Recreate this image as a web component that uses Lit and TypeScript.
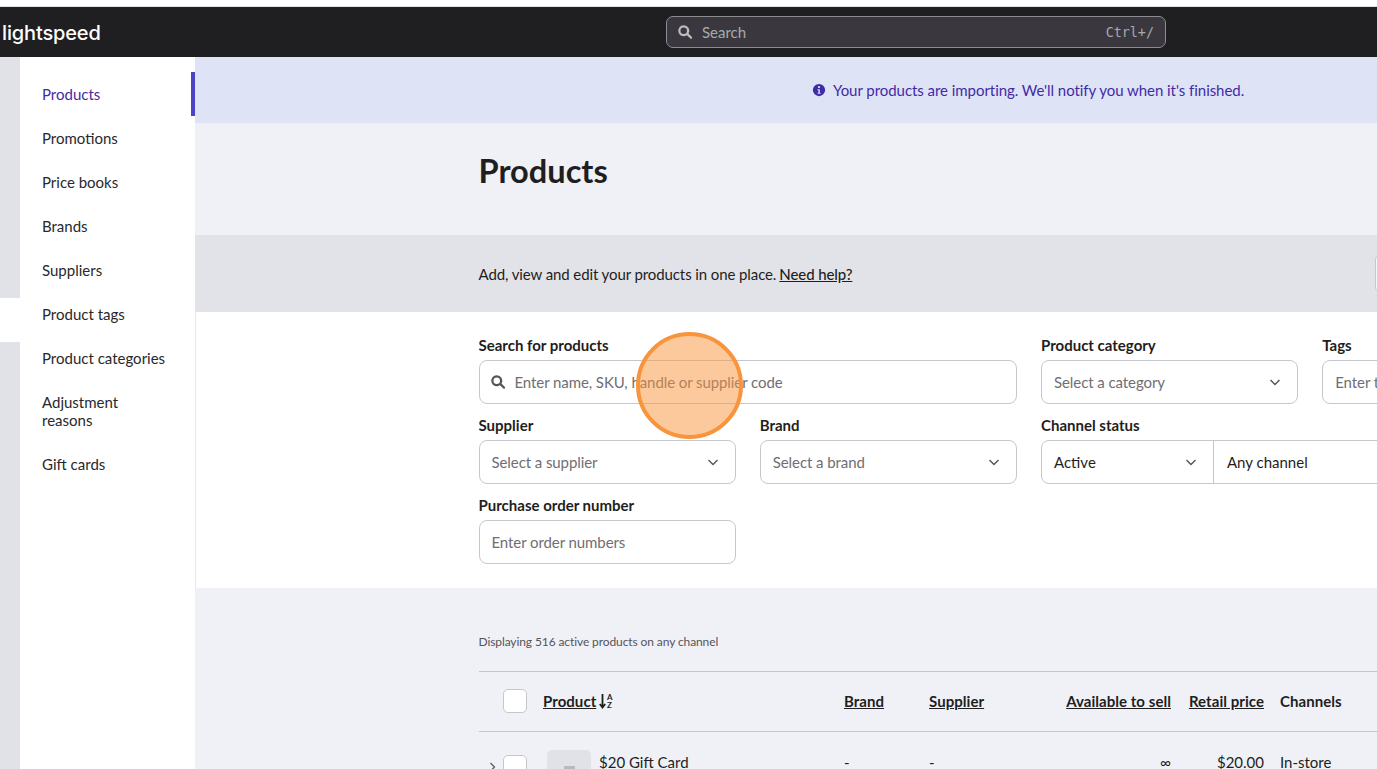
import { LitElement, html, css, svg } from "lit";
import { customElement } from "lit/decorators.js";

const searchIcon = svg`<path d="M10.300 3a7.300 7.300 0 1 0 4.300 13.200l4.500 4.500a1.500 1.500 0 0 0 2.100-2.100l-4.500-4.500A7.300 7.300 0 0 0 10.300 3zm0 3a4.300 4.300 0 1 1 0 8.600 4.300 4.300 0 0 1 0-8.600z" fill="currentColor" fill-rule="evenodd"/>`;

const chevron = html`<svg class="chev" viewBox="0 0 12 12"><path d="M1.500 4l4.500 4.500L10.500 4" fill="none" stroke="currentColor" stroke-width="1.400"/></svg>`;

const navItems = [
  "Products",
  "Promotions",
  "Price books",
  "Brands",
  "Suppliers",
  "Product tags",
  "Product categories",
  "Adjustment reasons",
  "Gift cards",
];

@customElement("app-root")
export class AppRoot extends LitElement {
  static styles = css`
    :host {
      display: block;
      position: relative;
      width: 1377px;
      height: 769px;
      overflow: hidden;
      background: #fff;
      font-family: Lato, "Liberation Sans", sans-serif;
      font-size: 15px;
      line-height: 18px;
      color: #1f1e21;
    }
    .topbar {
      margin-top: 6px;
      height: 51px;
      background: #1f1e21;
      position: relative;
      display: flex;
      align-items: center;
      padding-left: 666px;
      border-top: 1px solid #e1e2e8;
      box-sizing: border-box;
    }
    .logo {
      position: absolute;
      left: 2px;
      top: 13px;
      color: #fff;
      font-family: Inter, sans-serif;
      font-size: 20px;
      font-weight: 500;
      line-height: 26px;
      letter-spacing: -0.150px;
    }
    .global-search {
      width: 500px;
      height: 32px;
      box-sizing: border-box;
      border: 1px solid #8d8c91;
      border-radius: 7px;
      background: #3a383e;
      display: flex;
      align-items: center;
      padding: 0 11px;
      color: #a9a8ad;
    }
    .global-search svg {
      width: 18px;
      height: 18px;
      margin: 0 8px 0 -2px;
      color: #bdbcc1;
    }
    .global-search .kbd {
      margin-left: auto;
      padding-top: 2px;
      font-family: "DejaVu Sans Mono", monospace;
      font-size: 13.400px;
    }
    .body {
      display: flex;
      height: 712px;
    }
    .rail {
      width: 20px;
      flex: none;
      background: #e1e2e8;
    }
    .rail .notch {
      height: 44px;
      margin-top: 241px;
      background: #fff;
    }
    .side {
      width: 175px;
      flex: none;
      box-sizing: border-box;
      background: #fff;
      padding-top: 15px;
      color: #29282c;
    }
    .nav-item {
      padding: 13px 27px 13px 22px;
    }
    .nav-item.active {
      color: #3f2ba6;
      padding-right: 23px;
      border-right: 4px solid #4c44c6;
    }
    .main {
      flex: 1;
      min-width: 0;
      background: #f0f1f7;
    }
    .banner {
      height: 66px;
      background: #dfe3f6;
      color: #3f2ba6;
      display: flex;
      align-items: center;
      padding-left: 617px;
      gap: 7px;
      letter-spacing: -0.050px;
    }
    .banner svg {
      width: 14px;
      height: 14px;
    }
    .title {
      height: 112px;
      box-sizing: border-box;
      padding: 28px 0 0 283.500px;
    }
    .title h1 {
      margin: 0;
      font-size: 32.600px;
      line-height: 40px;
      font-weight: 700;
    }
    .intro {
      height: 77px;
      background: #e2e3e8;
      box-sizing: border-box;
      padding-left: 283.500px;
      display: flex;
      align-items: center;
      position: relative;
      letter-spacing: -0.100px;
    }
    .intro a {
      color: inherit;
      margin-left: 3px;
      font-weight: 500;
      text-decoration: underline;
    }
    .intro .btn {
      position: absolute;
      left: 1180px;
      top: 19px;
      width: 60px;
      height: 39px;
      box-sizing: border-box;
      border: 1px solid #c6c7cc;
      border-radius: 6px;
      background: #f6f6f9;
    }
    .filters {
      height: 276px;
      box-sizing: border-box;
      background: #fff;
      border-left: 1px solid #e8e9ee;
      padding: 24px 0 0 282.500px;
      display: grid;
      grid-template-columns: repeat(4, 257.250px);
      grid-auto-rows: 80px;
      column-gap: 24px;
    }
    .field {
      display: flex;
      flex-direction: column;
      min-width: 0;
    }
    .field.wide {
      grid-column: span 2;
    }
    .field.clip {
      width: 400px;
    }
    .field label {
      font-weight: 700;
      margin-bottom: 6px;
    }
    .box {
      height: 44px;
      box-sizing: border-box;
      border: 1px solid #c6c7cc;
      border-radius: 8px;
      background: #fff;
      display: flex;
      align-items: center;
      padding: 0 12px;
      color: #6f6e73;
      white-space: nowrap;
      letter-spacing: -0.080px;
    }
    .box svg.glass {
      width: 18px;
      height: 18px;
      margin: 0 8px 0 -3px;
      color: #55545a;
      flex: none;
    }
    .chev {
      width: 12px;
      height: 12px;
      margin-left: auto;
      margin-right: 4px;
      color: #55545a;
      flex: none;
    }
    .channel {
      padding: 0;
      color: #1f1e21;
      letter-spacing: 0;
    }
    .channel .status {
      width: 172px;
      height: 100%;
      flex: none;
      box-sizing: border-box;
      display: flex;
      align-items: center;
      padding: 0 12px;
      border-right: 1px solid #c6c7cc;
    }
    .channel .any {
      padding-left: 13px;
    }
    .list {
      padding: 45px 0 0 283.500px;
    }
    .count {
      font-size: 12px;
      line-height: 18px;
      color: #55545a;
      letter-spacing: -0.100px;
    }
    .row {
      display: grid;
      grid-template-columns: 24.500px 24px 301px 85px 137px 121px 93px 200px;
      align-items: center;
    }
    .row.head {
      height: 61px;
      box-sizing: border-box;
      margin-top: 20px;
      padding-bottom: 2px;
      border-top: 1px solid #c6c7cc;
      border-bottom: 1px solid #c6c7cc;
      font-weight: 700;
      letter-spacing: 0.050px;
    }
    .row.item {
      padding-top: 18px;
      align-items: start;
    }
    .cell {
      padding-left: 16px;
    }
    .item .cell {
      padding-top: 3px;
    }
    .right {
      text-align: right;
    }
    .head .sort {
      text-decoration: underline;
    }
    .product-head {
      display: flex;
      align-items: center;
      gap: 3px;
    }
    .product-head svg {
      width: 15px;
      height: 18px;
      font-family: Lato, sans-serif;
    }
    .check {
      width: 24px;
      height: 24px;
      box-sizing: border-box;
      border: 1px solid #c6c7cc;
      border-radius: 5px;
      background: #fff;
    }
    .item .check {
      margin-top: 5px;
    }
    .item .expand {
      width: 7px;
      height: 10px;
      margin: 12px 0 0 10px;
      color: #55545a;
    }
    .item .product {
      display: flex;
      gap: 8px;
      padding: 0 0 0 20px;
    }
    .product .name {
      padding-top: 3px;
    }
    .thumb {
      width: 44px;
      height: 44px;
      flex: none;
      background: #e1e2e8;
      border-radius: 5px;
      display: flex;
      justify-content: center;
      padding-top: 16px;
      box-sizing: border-box;
    }
    .thumb span {
      width: 11px;
      height: 12px;
      background: #b9bac0;
      border-radius: 1px;
    }
    .marker {
      position: absolute;
      left: 636px;
      top: 332px;
      width: 107px;
      height: 107px;
      box-sizing: border-box;
      border-radius: 50%;
      border: 4px solid #f8943c;
      background: rgba(250, 148, 60, 0.5);
    }
  `;

  render() {
    return html`
      <header class="topbar">
        <div class="logo">lightspeed</div>
        <div class="global-search">
          <svg viewBox="0 0 24 24">${searchIcon}</svg>
          <span>Search</span>
          <span class="kbd">Ctrl+/</span>
        </div>
      </header>
      <div class="body">
        <div class="rail"><div class="notch"></div></div>
        <nav class="side">
          ${navItems.map(
            (n, i) => html`<div class="nav-item ${i === 0 ? "active" : ""}">${n}</div>`
          )}
        </nav>
        <main class="main">
          <div class="banner">
            <svg viewBox="0 0 16 16">
              <path
                fill="currentColor"
                fill-rule="evenodd"
                d="M8 1a7 7 0 1 0 0 14A7 7 0 0 0 8 1zm0 2.300a1.300 1.300 0 1 1 0 2.600 1.300 1.300 0 0 1 0-2.600zM6.400 7h2.500v4h.9v1.400H6.400V11h.9V8.400h-.9z"
              />
            </svg>
            <span>Your products are importing. We'll notify you when it's finished.</span>
          </div>
          <div class="title"><h1>Products</h1></div>
          <div class="intro">
            <span>Add, view and edit your products in one place.</span><a href="#">Need help?</a>
            <div class="btn"></div>
          </div>
          <section class="filters">
            <div class="field wide">
              <label>Search for products</label>
              <div class="box">
                <svg class="glass" viewBox="0 0 24 24">${searchIcon}</svg>
                Enter name, SKU, handle or supplier code
              </div>
            </div>
            <div class="field">
              <label>Product category</label>
              <div class="box">Select a category ${chevron}</div>
            </div>
            <div class="field">
              <label>Tags</label>
              <div class="box">Enter tags</div>
            </div>
            <div class="field">
              <label>Supplier</label>
              <div class="box">Select a supplier ${chevron}</div>
            </div>
            <div class="field">
              <label>Brand</label>
              <div class="box">Select a brand ${chevron}</div>
            </div>
            <div class="field clip">
              <label>Channel status</label>
              <div class="box channel">
                <div class="status">Active ${chevron}</div>
                <div class="any">Any channel</div>
              </div>
            </div>
            <div></div>
            <div class="field">
              <label>Purchase order number</label>
              <div class="box">Enter order numbers</div>
            </div>
          </section>
          <section class="list">
            <div class="count">Displaying 516 active products on any channel</div>
            <div class="row head">
              <div></div>
              <div class="check"></div>
              <div class="cell product-head">
                <span class="sort">Product</span>
                <svg viewBox="0 0 15 18">
                  <path d="M3.500 2v13M.800 12l2.700 3.500L6.200 12" fill="none" stroke="currentColor" stroke-width="1.800" />
                  <text x="8" y="8" font-size="8" font-weight="700" fill="currentColor">A</text>
                  <text x="8" y="16" font-size="8" font-weight="700" fill="currentColor">Z</text>
                </svg>
              </div>
              <div class="cell sort">Brand</div>
              <div class="cell sort">Supplier</div>
              <div class="cell right"><span class="sort">Available to sell</span></div>
              <div class="cell right"><span class="sort">Retail price</span></div>
              <div class="cell">Channels</div>
            </div>
            <div class="row item">
              <svg class="expand" viewBox="0 0 7 10">
                <path d="M1.500 1l4 4-4 4" fill="none" stroke="currentColor" stroke-width="1.200" />
              </svg>
              <div class="check"></div>
              <div class="cell product">
                <div class="thumb"><span></span></div>
                <span class="name">$20 Gift Card</span>
              </div>
              <div class="cell">-</div>
              <div class="cell">-</div>
              <div class="cell right">∞</div>
              <div class="cell right">$20.00</div>
              <div class="cell">In-store</div>
            </div>
          </section>
        </main>
      </div>
      <div class="marker"></div>
    `;
  }
}
